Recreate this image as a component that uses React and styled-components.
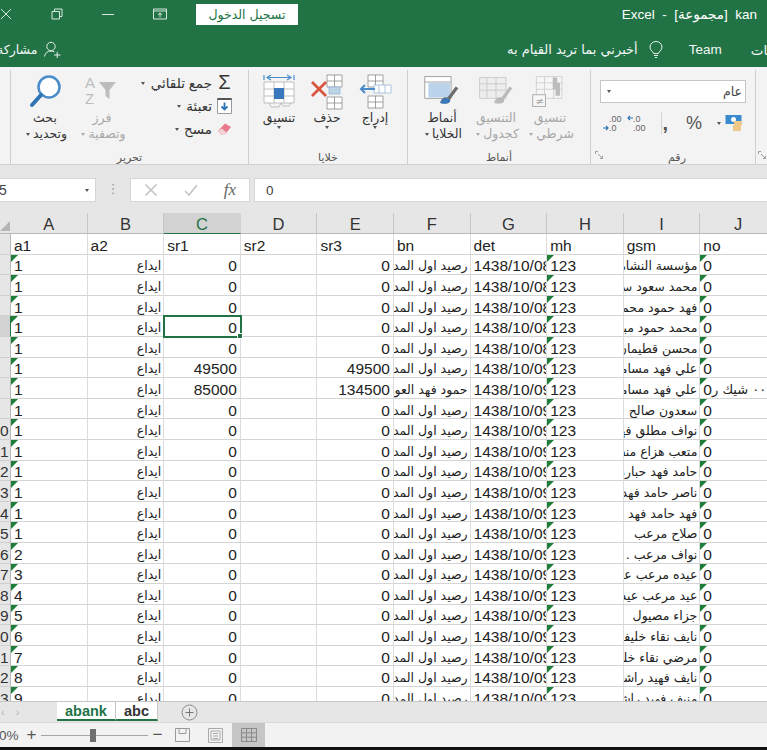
import React from 'react';
import styled, { createGlobalStyle } from 'styled-components';

const GREEN = '#217346';

const GlobalStyle = createGlobalStyle`
  html, body {
    margin: 0;
    width: 767px;
    height: 750px;
    overflow: hidden;
    background: #111;
    font-family: 'Liberation Sans', 'DejaVu Sans', sans-serif;
  }
`;

const Page = styled.div`
  width: 767px;
  height: 747px;
  display: flex;
  flex-direction: column;
  overflow: hidden;
  background: #e6e6e6;
`;

/* title + menu rows */
const Header = styled.header`
  background: ${GREEN};
  color: #fff;
  height: 67px;
  flex: none;
`;

const TitleBar = styled.div`
  height: 28px;
  display: flex;
  align-items: center;
`;

const WinButtons = styled.div`
  display: flex;
  gap: 39px;
  align-items: center;
  color: #d9e8df;
`;

const SignIn = styled.button`
  margin-left: 29px;
  width: 102px;
  height: 21px;
  border: 0;
  padding: 0;
  background: #fff;
  color: ${GREEN};
  font: 12.5px 'DejaVu Sans', sans-serif;
`;

const DocTitle = styled.div`
  margin-left: auto;
  padding-right: 10px;
  font-size: 13.5px;
  white-space: pre;
`;

const MenuBar = styled.div`
  height: 35px;
  padding-top: 4px;
  display: flex;
  align-items: center;
  font-size: 13.5px;
  color: #f2f7f4;
`;

const Share = styled.div`
  flex: none;
  width: 510px;
  margin-left: -3px;
  display: flex;
  align-items: center;
  gap: 7px;
  font-family: 'DejaVu Sans', sans-serif;
  font-size: 12.5px;
`;

const TellMe = styled.div`
  flex: none;
  display: flex;
  align-items: center;
  gap: 11px;
  font-family: 'DejaVu Sans', sans-serif;
  font-size: 13px;
`;

const MenuTab = styled.div`
  flex: none;
  margin-left: ${(p) => p.$left}px;
  white-space: nowrap;
`;

/* ribbon */
const Ribbon = styled.section`
  height: 98px;
  flex: none;
  display: flex;
  background: #f3f3f3;
  border-bottom: 1px solid #d2d2d2;
  box-sizing: border-box;
  overflow: hidden;
`;

const Group = styled.div`
  position: relative;
  flex: none;
  width: ${(p) => p.$w}px;
  box-sizing: border-box;
  display: flex;
  flex-direction: column;
  margin-top: 3px;
  border-left: 1px solid #cfcfcf;
`;

const GroupBody = styled.div`
  flex: 1;
  display: flex;
  padding-right: ${(p) => p.$pr || 0}px;
  min-height: 0;
`;

const GroupLabel = styled.div`
  flex: none;
  height: 14px;
  font-size: 11px;
  line-height: 14px;
  text-align: center;
  color: #555;
  padding-left: ${(p) => p.$pl || 0}px;
`;

const Launcher = styled.svg`
  position: absolute;
  right: ${(p) => p.$right}px;
  bottom: 5px;
  width: 8px;
  height: 8px;
`;

const Tool = styled.div`
  flex: none;
  width: ${(p) => p.$w}px;
  display: flex;
  flex-direction: column;
  align-items: center;
  padding-top: 4px;
  font-size: 12.5px;
  line-height: 16px;
  color: ${(p) => (p.$off ? '#a8a8a8' : '#333')};
  white-space: nowrap;
  svg.big {
    height: 36px;
    width: 40px;
    flex: none;
  }
`;

const Caret = styled.span`
  display: inline-block;
  width: 0;
  height: 0;
  margin: 0 ${(p) => p.$mx || 3}px;
  vertical-align: middle;
  border: 2.5px solid transparent;
  border-top: 3px solid ${(p) => (p.$off ? '#aaa' : '#555')};
  border-bottom: 0;
`;

const EditList = styled.div`
  flex: none;
  width: 100px;
  display: flex;
  flex-direction: column;
  gap: 2px;
  padding-top: 2px;
`;

const EditRow = styled.div`
  height: 21px;
  display: flex;
  align-items: center;
  gap: 5px;
  font-size: 13.5px;
  color: #333;
  white-space: nowrap;
  svg, b {
    flex: none;
    width: 15px;
  }
  b {
    font: 400 20px 'Liberation Sans', sans-serif;
    text-align: center;
    color: #333;
  }
`;

const NumberPane = styled.div`
  flex: 1;
  padding: 10px 9px 0;
  display: flex;
  flex-direction: column;
`;

const FormatSelect = styled.div`
  height: 23px;
  box-sizing: border-box;
  background: #fff;
  border: 1px solid #c6c6c6;
  display: flex;
  align-items: center;
  justify-content: space-between;
  padding: 0 3px;
  font-size: 12.5px;
  color: #444;
`;

const NumberRow = styled.div`
  display: flex;
  align-items: center;
  height: 28px;
  margin-top: 6px;
  padding: 0 3px;
  direction: rtl;
`;

const NumGlyph = styled.span`
  font-size: ${(p) => p.$size}px;
  color: #555;
  line-height: 1;
  margin-right: ${(p) => p.$mr || 0}px;
  font-weight: ${(p) => (p.$bold ? 700 : 400)};
`;

const NumDivider = styled.span`
  width: 1px;
  height: 22px;
  background: #d4d4d4;
  margin-left: 14px;
`;

const DecimalGap = styled.span`
  width: 4px;
`;

/* formula bar */
const FormulaStrip = styled.div`
  height: 48px;
  flex: none;
  box-sizing: border-box;
  padding: 13px 0 11px;
  display: flex;
  align-items: stretch;
  overflow: hidden;
`;

const NameBox = styled.div`
  flex: none;
  width: 108px;
  margin-left: -12px;
  background: #fff;
  border: 1px solid #d6d6d6;
  box-sizing: border-box;
  display: flex;
  align-items: center;
  justify-content: space-between;
  padding-right: 3px;
  font-size: 14px;
  color: #444;
`;

const Grip = styled.div`
  flex: none;
  width: 34px;
  text-align: center;
  color: #9b9b9b;
  font-size: 13px;
  line-height: 22px;
`;

const FxBox = styled.div`
  flex: none;
  width: 120px;
  background: #fff;
  border: 1px solid #d6d6d6;
  box-sizing: border-box;
  display: flex;
  align-items: center;
  justify-content: flex-end;
  gap: 26px;
  padding-right: 13px;
  color: #c4c4c4;
  i {
    color: #666;
    font: italic 17px 'Liberation Serif', serif;
  }
`;

const FormulaInput = styled.div`
  flex: 1;
  margin-left: 4px;
  margin-right: -2px;
  background: #fff;
  border: 1px solid #d6d6d6;
  display: flex;
  align-items: center;
  padding-left: 11px;
  font-size: 13.5px;
  color: #444;
`;

/* sheet */
const Sheet = styled.div`
  height: 488px;
  flex: none;
  overflow: hidden;
  background: #fff;
  display: grid;
  grid-template-columns: 11px repeat(10, 76.6px);
  grid-template-rows: 21px;
  grid-auto-rows: 20.6px;
`;

const Corner = styled.div`
  position: relative;
  background: #e6e6e6;
  border-bottom: 1px solid #b8b8b8;
  &::after {
    content: '';
    position: absolute;
    right: 1px;
    bottom: 2px;
    border: 5px solid transparent;
    border-right-color: #b5b5b5;
    border-bottom-color: #b5b5b5;
  }
`;

const ColHead = styled.div`
  box-sizing: border-box;
  background: ${(p) => (p.$active ? '#d2d2d2' : '#e6e6e6')};
  color: ${(p) => (p.$active ? GREEN : '#333')};
  border-right: 1px solid ${(p) => (p.$active ? '#d2d2d2' : '#c6c6c6')};
  border-bottom: 1px solid ${(p) => (p.$active ? GREEN : '#b8b8b8')};
  display: flex;
  align-items: center;
  justify-content: center;
  padding-top: 2px;
  font-size: 16.5px;
`;

const RowHead = styled.div`
  box-sizing: border-box;
  background: ${(p) => (p.$active ? '#d2d2d2' : '#e6e6e6')};
  color: #333;
  border-right: 1px solid ${(p) => (p.$active ? GREEN : '#b8b8b8')};
  border-bottom: 1px solid #cfcfcf;
  display: flex;
  align-items: center;
  justify-content: flex-end;
  overflow: hidden;
  font-size: 15.5px;
  padding: 4px 1px 0 0;
  direction: rtl;
`;

const Cell = styled.div`
  position: relative;
  box-sizing: border-box;
  min-width: 0;
  border-right: 1px solid #dcdcdc;
  border-bottom: 1px solid #d4d4d4;
  display: flex;
  align-items: center;
  justify-content: ${(p) => (p.$right ? 'flex-end' : 'flex-start')};
  padding: 4px ${(p) => (p.$right ? 3 : 0)}px 0 ${(p) => (p.$right ? 0 : 3)}px;
  font-size: 15.5px;
  color: #222;
  white-space: nowrap;
  overflow: ${(p) => (p.$selected ? 'visible' : 'hidden')};
  ${(p) => p.$selected && `outline: 2px solid ${GREEN}; outline-offset: -1px; z-index: 2;`}
  ${(p) =>
    p.$flag &&
    `&::before {
      content: '';
      position: absolute;
      left: 0;
      top: 0;
      border-style: solid;
      border-width: 7px 7px 0 0;
      border-color: #1f7d3a transparent transparent transparent;
    }`}
  ${(p) =>
    p.$selected &&
    `&::after {
      content: '';
      position: absolute;
      right: -3px;
      bottom: -3px;
      width: 4px;
      height: 4px;
      background: ${GREEN};
      border: 1px solid #fff;
    }`}
`;

const ArabicCell = styled(Cell)`
  direction: rtl;
  justify-content: flex-start;
  padding: 3px 2px 0 0;
  font-family: 'DejaVu Sans', sans-serif;
  font-size: 12.5px;
`;

const Overflowed = styled.span`
  margin: 0 7px 0 auto;
  direction: rtl;
  font: 13px 'DejaVu Sans', sans-serif;
  letter-spacing: 1px;
`;

/* tabs + status */
const TabStrip = styled.div`
  height: 21px;
  flex: none;
  display: flex;
  align-items: flex-start;
  background: #e6e6e6;
  border-top: 1px solid #c6c6c6;
  box-sizing: border-box;
`;

const ScrollArrows = styled.div`
  width: 57px;
  display: flex;
  gap: 11px;
  height: 20px;
  align-items: center;
  color: #b4b4b4;
  font-size: 11px;
  padding-left: 1px;
  box-sizing: border-box;
`;

const SheetTab = styled.div`
  height: 19px;
  box-sizing: border-box;
  width: ${(p) => p.$w}px;
  background: #fff;
  border-right: 1px solid #c6c6c6;
  border-bottom: 2px solid ${GREEN};
  display: flex;
  align-items: center;
  justify-content: center;
  font-size: 14.5px;
  font-weight: 700;
  color: ${(p) => (p.$active ? GREEN : '#333')};
`;

const AddSheet = styled.svg`
  margin: 2px 0 0 23px;
  width: 17px;
  height: 17px;
`;

const StatusBar = styled.footer`
  flex: 1;
  display: flex;
  align-items: stretch;
  background: #f2f2f2;
  border-top: 1px solid #dadada;
  font-size: 13.5px;
  color: #555;
  overflow: hidden;
`;

const Zoom = styled.div`
  margin-left: -16px;
  width: 186px;
  display: flex;
  align-items: center;
  flex: none;
`;

const ZoomSign = styled.span`
  font-size: 17px;
  margin-left: ${(p) => p.$ml || 0}px;
`;

const Slider = styled.div`
  position: relative;
  flex: none;
  width: 107px;
  height: 1px;
  margin: 0 4px 0 5px;
  background: #a6a6a6;
  &::after {
    content: '';
    position: absolute;
    left: 49px;
    top: -6px;
    width: 6px;
    height: 13px;
    background: #6f6f6f;
  }
`;

const ViewButton = styled.div`
  flex: none;
  width: 33px;
  display: flex;
  align-items: center;
  justify-content: center;
  background: ${(p) => (p.$active ? '#c6c6c6' : 'transparent')};
`;

const Views = styled.div`
  display: flex;
  align-items: stretch;
  margin-left: -4px;
`;

/* icons */
const Svg = ({ w = 40, h = 36, className, children }) => (
  <svg className={className} width={w} height={h} viewBox={`0 0 ${w} ${h}`} fill="none" direction="ltr">
    {children}
  </svg>
);

const MiniTable = ({ x, y, c = '#8a8a8a' }) => (
  <path
    d={`M${x} ${y}h15v12h-15zM${x} ${y + 6}h15M${x + 7.5} ${y}v12`}
    stroke={c}
    strokeWidth="0.8"
    fill="#fff"
  />
);

const CloseIcon = () => (
  <Svg w={12} h={12}>
    <path d="M1 1l10 10M11 1L1 11" stroke="currentColor" />
  </Svg>
);
const RestoreIcon = () => (
  <Svg w={12} h={12}>
    <path d="M1 3.500h7.500V11H1zM3.500 3.500V1H11v7.500H8.500" stroke="currentColor" />
  </Svg>
);
const MinIcon = () => (
  <Svg w={12} h={12}>
    <path d="M0 6.500h12" stroke="currentColor" />
  </Svg>
);
const DisplayIcon = () => (
  <Svg w={14} h={12}>
    <path d="M.5 1h13v10H.5zM.5 3h13M7 9.500V5M4.800 7L7 4.800 9.200 7" stroke="currentColor" />
  </Svg>
);
const UserIcon = () => (
  <Svg w={17} h={17}>
    <circle cx="7" cy="5.500" r="4.200" stroke="#e6f0ea" />
    <path d="M.5 15.500c.5-3.500 3-5.500 6.500-5.500 1.500 0 2.500.4 3.500 1M10 14h6.500M13.200 10.800v6.200" stroke="#e6f0ea" />
  </Svg>
);
const BulbIcon = () => (
  <Svg w={14} h={18}>
    <path
      d="M4.500 12.500C4.300 10.500 1 9.500 1 6a6 5.500 0 0 1 12 0c0 3.500-3.300 4.500-3.500 6.500zM5 14.500h4M6 16.500h2"
      stroke="#e6f0ea"
    />
  </Svg>
);

const SearchIcon = () => (
  <Svg className="big" w={40} h={36}>
    <circle cx="24" cy="13" r="10.500" stroke="#4a8bc9" strokeWidth="2.500" fill="#fff" />
    <path d="M16 21L7 31" stroke="#2f75b5" strokeWidth="4" strokeLinecap="round" />
  </Svg>
);
const SortIcon = () => (
  <Svg className="big" w={40} h={36}>
    <text x="3" y="14" fontSize="15" fontFamily="Liberation Sans" fill="#bdbdbd">A</text>
    <text x="3" y="30" fontSize="15" fontFamily="Liberation Sans" fill="#bdbdbd">Z</text>
    <path d="M17 8h17l-6.500 8v9l-4-3v-6z" fill="#bdbdbd" />
  </Svg>
);
const FillIcon = () => (
  <Svg w={15} h={16}>
    <path d="M.5 .5h14v15H.5z" fill="#fff" stroke="#9a9a9a" />
    <path d="M.5 1h14" stroke="#555" strokeWidth="2" />
    <path d="M7.500 4.500v7M4.500 8.500l3 3 3-3" stroke="#2f75b5" strokeWidth="1.800" />
  </Svg>
);
const EraserIcon = () => (
  <Svg w={15} h={14}>
    <path d="M1 9l7-7.500 6 3.500-6.500 8H4z" fill="#e8788a" />
    <path d="M1 9l3 4h3.500l2-2.500-4.500-4z" fill="#f4d3d8" />
  </Svg>
);
const InsertIcon = () => (
  <Svg className="big" w={40} h={36}>
    <MiniTable x={13} y={1} />
    <MiniTable x={13} y={22} />
    <path d="M19 11h17v8H19z" fill="#fff" stroke="#9ab7d4" strokeWidth="0.8" />
    <path d="M24 11v8M30 11v8" stroke="#9ab7d4" strokeWidth="0.8" />
    <path d="M20 15H6M10 11l-4 4 4 4" stroke="#4a8bc9" strokeWidth="2" />
  </Svg>
);
const DeleteIcon = () => (
  <Svg className="big" w={40} h={36}>
    <MiniTable x={20} y={1} />
    <MiniTable x={20} y={23} />
    <path d="M22 13h11v7H22z" fill="#bcd3e8" stroke="#9ab7d4" strokeWidth="0.8" />
    <path d="M5 8l14 14M19 8L5 22" stroke="#d9553f" strokeWidth="2.800" />
  </Svg>
);
const FormatIcon = () => (
  <Svg className="big" w={40} h={36}>
    <path d="M5 1v5M35 1v5M8 3.500h24M12 1l-4 2.500 4 2.500M28 1l4 2.500-4 2.500" stroke="#4a8bc9" strokeWidth="1.200" />
    <path d="M5 8h30v21H5zM5 15h30M5 22h30M15 8v21M25 8v21" stroke="#b0b0b0" strokeWidth="0.8" fill="#fff" />
    <path d="M15 14h10v11H15z" fill="#3a78bd" />
    <path d="M10 29l2 4h8l2-4M22 29l2 3h6l2-3" stroke="#b0b0b0" strokeWidth="0.8" />
  </Svg>
);
const Brush = ({ c }) => (
  <path d="M20 30c1-5 4-7 8-6l9-12 3 2-9 12c1 4-4 6-11 4z" fill={c} />
);
const CellStylesIcon = () => (
  <Svg className="big" w={44} h={36}>
    <path d="M3 1h29v24H3zM3 7h29" stroke="#9a9a9a" fill="#fff" />
    <path d="M7 8h24v16H7z" fill="#bcd3ec" />
    <Brush c="#6d6d6d" />
    <path d="M20 30c1-4 4-6 8-5l3 2c0 3-4 5-11 3z" fill="#3a78bd" />
  </Svg>
);
const TableIcon = () => (
  <Svg className="big" w={44} h={36}>
    <path d="M4 2h29v23H4zM4 9h29M4 16h29M12 2v23M22 2v23" stroke="#c9c9c9" fill="#ededed" />
    <Brush c="#b9b9b9" />
  </Svg>
);
const CondIcon = () => (
  <Svg className="big" w={44} h={36}>
    <path d="M7 1h28v24H7zM7 8h28M7 15h28M16 1v24M26 1v24" stroke="#cfcfcf" fill="#f6f6f6" />
    <path d="M25 2h5v6h3v14h-5v-7h-3z" fill="#bdbdbd" />
    <rect x="3" y="21" width="14" height="13" fill="#f6f6f6" stroke="#a9a9a9" />
    <text x="6" y="32" fontSize="11" fontFamily="DejaVu Sans" fill="#a0a0a0">≠</text>
  </Svg>
);
const CurrencyIcon = () => (
  <Svg w={18} h={18}>
    <rect x=".5" y="1" width="16" height="9" fill="#3a8ad0" />
    <circle cx="8.500" cy="5.500" r="2.500" fill="#fff" />
    <rect x="9" y="7" width="8" height="4" fill="#eec98a" />
    <rect x="8" y="11" width="8" height="6" fill="#eec98a" />
  </Svg>
);
const DecimalIcon = ({ flip }) => (
  <Svg w={20} h={20}>
    <text x="6" y="8.500" fontSize="9" fontFamily="Liberation Sans" fill="#666">{flip ? '.0' : '.00'}</text>
    <text x="6" y="18" fontSize="9" fontFamily="Liberation Sans" fill="#666">{flip ? '.00' : '.0'}</text>
    <path
      d={flip ? 'M6 5H1M3 3L1 5l2 2' : 'M0 15h5M3 13l2 2-2 2'}
      stroke="#2f75b5"
      strokeWidth="1.200"
      fill="none"
    />
  </Svg>
);
const LauncherIcon = ({ right }) => (
  <Launcher $right={right} viewBox="0 0 8 8" fill="none">
    <path d="M.5 3V.5H3M7.500 5v2.500H5M3 3l4 4" stroke="#8a8a8a" strokeWidth="0.8" />
  </Launcher>
);

const PageLayoutIcon = () => (
  <Svg w={15} h={14}>
    <path d="M.5 .5h14v13H.5zM4 .5v5h7v-5" stroke="#999" />
  </Svg>
);
const PageBreakIcon = () => (
  <Svg w={15} h={15}>
    <path d="M.5 .5h14v14H.5zM3 3h9v9H3zM5 5.500h5M5 8h5M5 10.500h5" stroke="#aaa" />
  </Svg>
);
const NormalIcon = () => (
  <Svg w={16} h={14}>
    <path d="M.5 .5h15v13H.5zM.5 4.800h15M.5 9.200h15M5.500 .5v13M10.500 .5v13" stroke="#8a8a8a" />
  </Svg>
);

/* data */
const names = [
  'مؤسسة النشامى للتجارة',
  'محمد سعود سالم الفهد',
  'فهد حمود محمد الفهد',
  'محمد حمود مبارك الفهد',
  'محسن قطيمان الفهد',
  'علي فهد مسامح الفهد',
  'علي فهد مسامح الفهد',
  'سعدون صالح',
  'نواف مطلق فهد الفهد',
  'متعب هزاع منصور',
  'حامد فهد حبارة الفهد',
  'ناصر حامد فهد الفهد',
  'فهد حامد فهد الفهد',
  'صلاح مرعب',
  'نواف مرعب .',
  'عيده مرعب عيد الفهد',
  'عيد مرعب عيد الفهد',
  'جزاء مصيول',
  'نايف نقاء خليفة الفهد',
  'مرضي نقاء خليفة الفهد',
  'نايف فهيد راشد الفهد',
  'منيف فهيد راشد الفهد',
];

const columns = ['A', 'B', 'C', 'D', 'E', 'F', 'G', 'H', 'I', 'J'];
const firstRow = ['a1', 'a2', 'sr1', 'sr2', 'sr3', 'bn', 'det', 'mh', 'gsm', 'no'];

const rows = names.map((name, i) => ({
  num: i + 2,
  a1: i < 14 ? 1 : i - 12,
  sr1: i === 5 ? 49500 : i === 6 ? 85000 : 0,
  sr3: i === 5 ? 49500 : i === 6 ? 134500 : 0,
  bn: i === 6 ? 'حمود فهد العون الفهد' : 'رصيد اول المدة للعميل',
  det: i < 5 ? '1438/10/08' : '1438/10/09',
  name,
  note: i === 6 ? '٠٠٠ شيك ر' : '',
}));

export default function App() {
  return (
    <Page>
      <GlobalStyle />
      <Header>
        <TitleBar>
          <WinButtons>
            <CloseIcon />
            <RestoreIcon />
            <MinIcon />
            <DisplayIcon />
          </WinButtons>
          <SignIn>تسجيل الدخول</SignIn>
          <DocTitle>{'Excel  -  [مجموعة]  kan'}</DocTitle>
        </TitleBar>
        <MenuBar>
          <Share>
            <span>مشاركة</span>
            <UserIcon />
          </Share>
          <TellMe>
            <span>أخبرني بما تريد القيام به</span>
            <BulbIcon />
          </TellMe>
          <MenuTab $left={26}>Team</MenuTab>
          <MenuTab $left={29}>بيانات</MenuTab>
        </MenuBar>
      </Header>

      <Ribbon dir="rtl">
        <Group $w={12}>
          <GroupBody />
          <LauncherIcon right={1} />
        </Group>
        <Group $w={165}>
          <GroupBody>
            <NumberPane>
              <FormatSelect>
                <span>عام</span>
                <Caret />
              </FormatSelect>
              <NumberRow>
                <CurrencyIcon />
                <Caret $mx={4} />
                <NumGlyph $size={18} $mr={11}>%</NumGlyph>
                <NumGlyph $size={20} $mr={18} $bold>,</NumGlyph>
                <NumDivider />
                <DecimalIcon flip />
                <DecimalGap />
                <DecimalIcon />
              </NumberRow>
            </NumberPane>
          </GroupBody>
          <GroupLabel $pl={8}>رقم</GroupLabel>
          <LauncherIcon right={152} />
        </Group>
        <Group $w={183}>
          <GroupBody $pr={13}>
            <Tool $w={54} $off>
              <CondIcon />
              <span>تنسيق</span>
              <span>شرطي<Caret $off /></span>
            </Tool>
            <Tool $w={54} $off>
              <TableIcon />
              <span>التنسيق</span>
              <span>كجدول<Caret $off /></span>
            </Tool>
            <Tool $w={54}>
              <CellStylesIcon />
              <span>أنماط</span>
              <span>الخلايا<Caret /></span>
            </Tool>
          </GroupBody>
          <GroupLabel>أنماط</GroupLabel>
        </Group>
        <Group $w={159}>
          <GroupBody $pr={8}>
            <Tool $w={48}>
              <InsertIcon />
              <span>إدراج</span>
              <Caret />
            </Tool>
            <Tool $w={48}>
              <DeleteIcon />
              <span>حذف</span>
              <Caret />
            </Tool>
            <Tool $w={48}>
              <FormatIcon />
              <span>تنسيق</span>
              <Caret />
            </Tool>
          </GroupBody>
          <GroupLabel>خلايا</GroupLabel>
        </Group>
        <Group $w={238}>
          <GroupBody $pr={16}>
            <EditList>
              <EditRow>
                <b>Σ</b>
                <span>جمع تلقائي<Caret $mx={6} /></span>
              </EditRow>
              <EditRow>
                <FillIcon />
                <span>تعبئة<Caret $mx={5} /></span>
              </EditRow>
              <EditRow>
                <EraserIcon />
                <span>مسح<Caret $mx={5} /></span>
              </EditRow>
            </EditList>
            <Tool $w={60} $off>
              <SortIcon />
              <span>فرز</span>
              <span>وتصفية<Caret $off /></span>
            </Tool>
            <Tool $w={54}>
              <SearchIcon />
              <span>بحث</span>
              <span>وتحديد<Caret /></span>
            </Tool>
          </GroupBody>
          <GroupLabel>تحرير</GroupLabel>
        </Group>
      </Ribbon>

      <FormulaStrip>
        <NameBox>
          <span>C5</span>
          <Caret />
        </NameBox>
        <Grip>⋮</Grip>
        <FxBox>
          <Svg w={14} h={14}>
            <path d="M1.500 1.500l11 11M12.500 1.500l-11 11" stroke="currentColor" strokeWidth="1.600" />
          </Svg>
          <Svg w={14} h={14}>
            <path d="M1 8l4 4 8-10" stroke="currentColor" strokeWidth="1.600" />
          </Svg>
          <i>fx</i>
        </FxBox>
        <FormulaInput>0</FormulaInput>
      </FormulaStrip>

      <Sheet>
        <Corner />
        {columns.map((c) => (
          <ColHead key={c} $active={c === 'C'}>{c}</ColHead>
        ))}

        <RowHead />
        {firstRow.map((t) => (
          <Cell key={t}>{t}</Cell>
        ))}

        {rows.map((r) => (
          <React.Fragment key={r.num}>
            <RowHead $active={r.num === 5}>{r.num > 9 ? r.num % 10 : ''}</RowHead>
            <Cell $flag>{r.a1}</Cell>
            <ArabicCell>ايداع</ArabicCell>
            <Cell $right $selected={r.num === 5}>{r.sr1}</Cell>
            <Cell />
            <Cell $right>{r.sr3}</Cell>
            <ArabicCell>{r.bn}</ArabicCell>
            <Cell>{r.det}</Cell>
            <Cell $flag>123</Cell>
            <ArabicCell>{r.name}</ArabicCell>
            <Cell $flag>
              0
              {r.note && <Overflowed>{r.note}</Overflowed>}
            </Cell>
          </React.Fragment>
        ))}
      </Sheet>

      <TabStrip>
        <ScrollArrows>
          <span>‹</span>
          <span>›</span>
        </ScrollArrows>
        <SheetTab $w={59} $active>abank</SheetTab>
        <SheetTab $w={42}>abc</SheetTab>
        <AddSheet viewBox="0 0 17 17" fill="none">
          <circle cx="8.500" cy="8.500" r="7.500" stroke="#8c8c8c" />
          <path d="M8.500 4.500v8M4.500 8.500h8" stroke="#777" />
        </AddSheet>
      </TabStrip>

      <StatusBar>
        <Zoom>
          <span>100%</span>
          <ZoomSign $ml={8}>+</ZoomSign>
          <Slider />
          <ZoomSign>−</ZoomSign>
        </Zoom>
        <Views>
          <ViewButton><PageLayoutIcon /></ViewButton>
          <ViewButton><PageBreakIcon /></ViewButton>
          <ViewButton $active><NormalIcon /></ViewButton>
        </Views>
      </StatusBar>
    </Page>
  );
}
